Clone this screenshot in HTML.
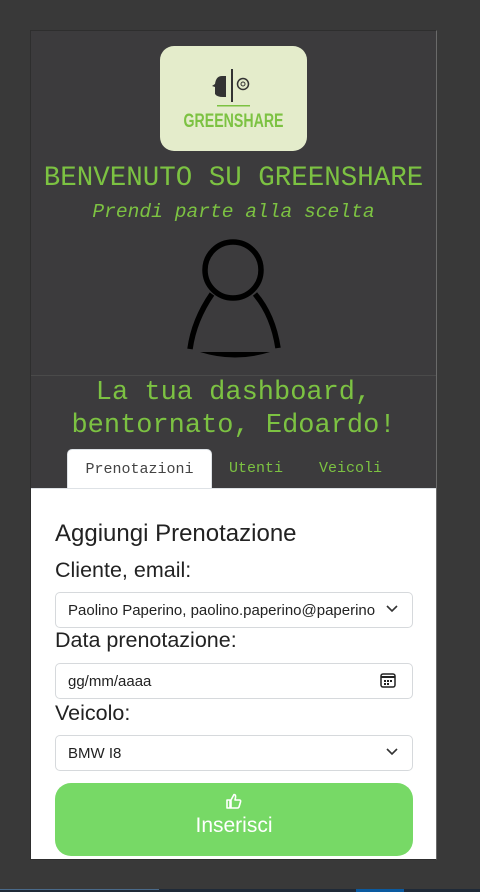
<!DOCTYPE html>
<html><head><style>
*{box-sizing:border-box;margin:0;padding:0}
body{width:480px;height:892px;background:#393939;position:relative;overflow:hidden;font-family:"Liberation Sans",sans-serif}
.panel{position:absolute;left:30px;top:30px;width:407px;height:830px;background:#3c3b3d;border:1px solid #2e2e2e;border-right-color:#6a6a6a}
.logo{position:absolute;left:160px;top:46px;width:147px;height:105px;background:#e4eccb;border-radius:14px}
.mono{font-family:"Liberation Mono",monospace;color:#7cc242;position:absolute;left:30px;width:407px;text-align:center;white-space:nowrap}
.white{position:absolute;left:31px;top:488px;width:405px;height:371px;background:#fff}
.ctl{position:absolute;left:55px;width:358px;height:36px;border:1px solid #d6d9dc;border-radius:5px;background:#fff;font-size:15px;color:#222;padding:9px 0 0 12px;white-space:nowrap;overflow:hidden}
.lbl{position:absolute;left:55px;font-size:21.5px;color:#222}
</style></head><body>
<div class="panel"></div>
<div class="logo">
<svg width="147" height="105" viewBox="0 0 147 105">
<path d="M62 30 q-6 0 -7 8 l-3 2 l3 1 v7 q2 3 8 3 l3 0 l0 -21z" fill="#333"/>
<rect x="71" y="23" width="2" height="33" fill="#333"/>
<circle cx="83" cy="38" r="5.5" fill="none" stroke="#333" stroke-width="1.5"/>
<circle cx="83" cy="38" r="2" fill="none" stroke="#333" stroke-width="1"/>
<rect x="57" y="59" width="33" height="1.5" fill="#7cc242"/>
<text x="73.5" y="81" text-anchor="middle" font-family="Liberation Sans Narrow,Liberation Sans,sans-serif" font-weight="bold" font-size="19" fill="#7cc242" textLength="100" lengthAdjust="spacingAndGlyphs">GREENSHARE</text>
</svg></div>
<div class="mono" style="top:163px;font-size:27.5px">BENVENUTO SU GREENSHARE</div>
<div class="mono" style="top:201px;font-size:19.6px;font-style:italic">Prendi parte alla scelta</div>
<svg style="position:absolute;left:180px;top:235px" width="110" height="130" viewBox="0 0 110 130">
<circle cx="53" cy="35" r="28" fill="none" stroke="#000" stroke-width="5.5"/>
<path d="M32 59 Q14 85 10 114" fill="none" stroke="#000" stroke-width="5.5"/>
<path d="M75 59 Q93 80 98 113" fill="none" stroke="#000" stroke-width="5.5"/>
<path d="M20 117 Q55 128 90 117 Z" fill="#000"/>
</svg>
<div style="position:absolute;left:31px;top:375px;width:405px;height:1px;background:#4a4a4a"></div>
<div class="mono" style="top:377px;font-size:27px;line-height:32.5px">La tua dashboard,<br>bentornato, Edoardo!</div>
<div style="position:absolute;left:67px;top:449px;width:145px;height:41px;background:#fff;border:1px solid #dee2e6;border-bottom:none;border-radius:5px 5px 0 0;font-family:'Liberation Mono',monospace;font-size:15px;color:#444;text-align:center;padding-top:11px">Prenotazioni</div>
<div style="position:absolute;left:229px;top:460px;font-family:'Liberation Mono',monospace;font-size:15px;color:#7cc242">Utenti</div>
<div style="position:absolute;left:319px;top:460px;font-family:'Liberation Mono',monospace;font-size:15px;color:#7cc242">Veicoli</div>
<div class="white"></div>
<div style="position:absolute;left:31px;top:488px;width:405px;height:1px;background:#dee2e6"></div>
<div class="lbl" style="top:520px;font-size:24px">Aggiungi Prenotazione</div>
<div class="lbl" style="top:558px">Cliente, email:</div>
<div class="ctl" style="top:592px"><span style="display:inline-block;width:308px;overflow:hidden;vertical-align:top">Paolino Paperino, paolino.paperino@paperino.it</span></div>
<svg style="position:absolute;left:386px;top:604px" width="12" height="10"><path d="M1 2 L6 7 L11 2" fill="none" stroke="#333" stroke-width="1.6"/></svg>
<div class="lbl" style="top:628px">Data prenotazione:</div>
<div class="ctl" style="top:663px">gg/mm/aaaa</div>
<svg style="position:absolute;left:380px;top:672px" width="17" height="17"><rect x="1" y="2" width="14" height="13" rx="2" fill="none" stroke="#222" stroke-width="1.5"/><rect x="1" y="4" width="14" height="2" fill="#222"/><rect x="4" y="8" width="2" height="2" fill="#222"/><rect x="7" y="8" width="2" height="2" fill="#222"/><rect x="10" y="8" width="2" height="2" fill="#222"/><rect x="4" y="11" width="2" height="2" fill="#222"/><rect x="7" y="11" width="2" height="2" fill="#222"/></svg>
<div class="lbl" style="top:701px">Veicolo:</div>
<div class="ctl" style="top:735px">BMW I8</div>
<svg style="position:absolute;left:386px;top:747px" width="12" height="10"><path d="M1 2 L6 7 L11 2" fill="none" stroke="#333" stroke-width="1.6"/></svg>
<div style="position:absolute;left:55px;top:783px;width:358px;height:73px;background:#77d966;border-radius:16px;color:#fff;text-align:center">
<svg style="margin-top:10px" width="16" height="16" viewBox="0 0 16 16"><path d="M1 7 h3 v8 h-3z M5 7 L8 1.5 q2 0 1.5 3 L9 7 h4.5 q1.5 0 1 2 l-1.5 5 q-.5 1 -1.5 1 H5z" fill="none" stroke="#fff" stroke-width="1.6" stroke-linejoin="round"/></svg>
<div style="font-size:21px;margin-top:0px">Inserisci</div>
</div>
<div style="position:absolute;left:0;top:889px;width:480px;height:3px;background:#1f2a38"></div>
<div style="position:absolute;left:0;top:889px;width:159px;height:1px;background:#4a6a8a"></div>
<div style="position:absolute;left:356px;top:889px;width:48px;height:3px;background:#0a5aa0"></div>
</body></html>
